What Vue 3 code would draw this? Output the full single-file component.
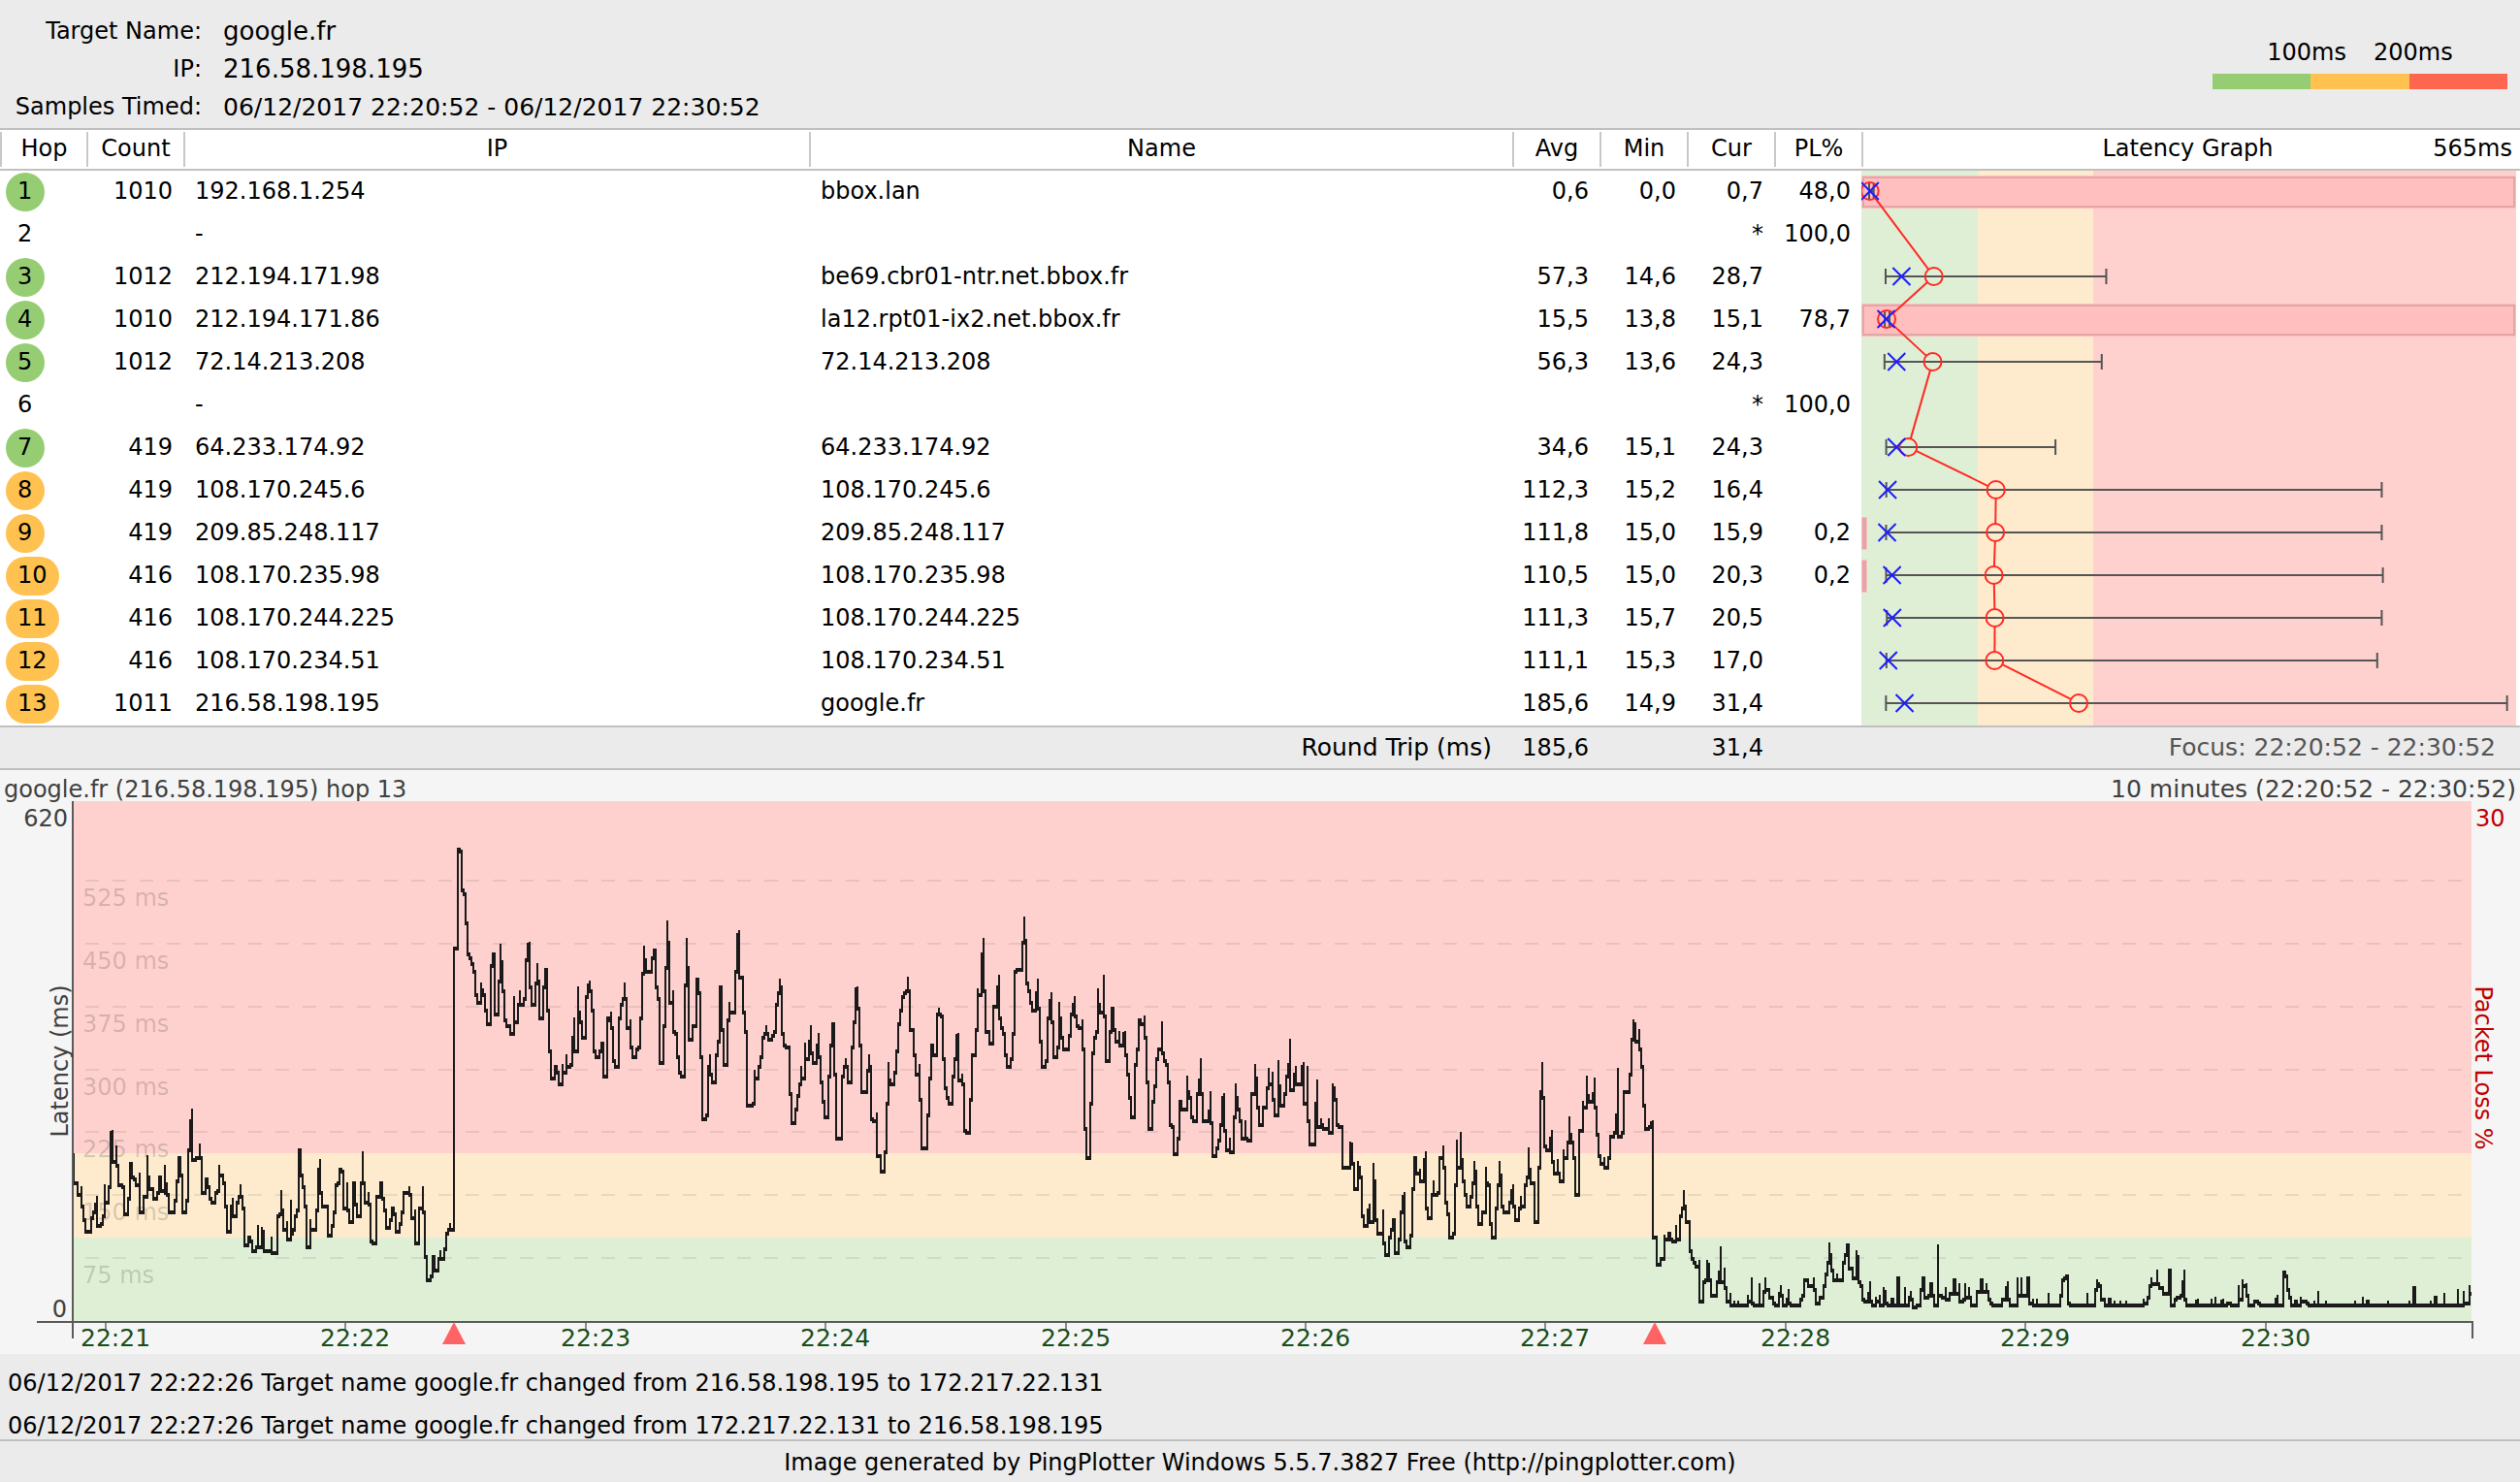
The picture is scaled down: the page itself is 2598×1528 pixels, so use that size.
<script setup>
const summary = [
  { label: 'Target Name:', value: 'google.fr', size: 'target' },
  { label: 'IP:', value: '216.58.198.195', size: 'target' },
  { label: 'Samples Timed:', value: '06/12/2017 22:20:52 - 06/12/2017 22:30:52', size: 'span' }
]

const hops = [
  { hop: 1, tone: 'good', count: '1010', ip: '192.168.1.254', name: 'bbox.lan', avg: '0,6', min: '0,0', cur: '0,7', loss: '48,0', max: 4, lossWidth: 675 },
  { hop: 2, tone: 'none', count: '', ip: '-', name: '', avg: '', min: '', cur: '*', loss: '100,0' },
  { hop: 3, tone: 'good', count: '1012', ip: '212.194.171.98', name: 'be69.cbr01-ntr.net.bbox.fr', avg: '57,3', min: '14,6', cur: '28,7', loss: '', max: 210 },
  { hop: 4, tone: 'good', count: '1010', ip: '212.194.171.86', name: 'la12.rpt01-ix2.net.bbox.fr', avg: '15,5', min: '13,8', cur: '15,1', loss: '78,7', max: 18, lossWidth: 675 },
  { hop: 5, tone: 'good', count: '1012', ip: '72.14.213.208', name: '72.14.213.208', avg: '56,3', min: '13,6', cur: '24,3', loss: '', max: 206 },
  { hop: 6, tone: 'none', count: '', ip: '-', name: '', avg: '', min: '', cur: '*', loss: '100,0' },
  { hop: 7, tone: 'good', count: '419', ip: '64.233.174.92', name: '64.233.174.92', avg: '34,6', min: '15,1', cur: '24,3', loss: '', max: 165 },
  { hop: 8, tone: 'warn', count: '419', ip: '108.170.245.6', name: '108.170.245.6', avg: '112,3', min: '15,2', cur: '16,4', loss: '', max: 454 },
  { hop: 9, tone: 'warn', count: '419', ip: '209.85.248.117', name: '209.85.248.117', avg: '111,8', min: '15,0', cur: '15,9', loss: '0,2', max: 454, lossWidth: 6 },
  { hop: 10, tone: 'warn', count: '416', ip: '108.170.235.98', name: '108.170.235.98', avg: '110,5', min: '15,0', cur: '20,3', loss: '0,2', max: 455, lossWidth: 6 },
  { hop: 11, tone: 'warn', count: '416', ip: '108.170.244.225', name: '108.170.244.225', avg: '111,3', min: '15,7', cur: '20,5', loss: '', max: 454 },
  { hop: 12, tone: 'warn', count: '416', ip: '108.170.234.51', name: '108.170.234.51', avg: '111,1', min: '15,3', cur: '17,0', loss: '', max: 450 },
  { hop: 13, tone: 'warn', count: '1011', ip: '216.58.198.195', name: 'google.fr', avg: '185,6', min: '14,9', cur: '31,4', loss: '', max: 565 }
]

const ROW = 44
const RADIUS = 9
const msToX = (ms) => 8 + ms * 1.164
const num = (text) => Number(text.replace(',', '.'))

const marks = hops
  .map((h, i) => ({ ...h, y: i * ROW + 21 }))
  .filter((h) => h.avg)
  .map((h) => ({ hop: h.hop, y: h.y, avg: msToX(num(h.avg)), min: msToX(num(h.min)), cur: msToX(num(h.cur)), max: msToX(h.max) }))

const losses = hops
  .map((h, i) => ({ hop: h.hop, top: i * ROW + 5, width: h.lossWidth }))
  .filter((l) => l.width)

// Connect neighbouring averages from circle edge to circle edge.
const links = marks.slice(1).map((b, i) => {
  const a = marks[i]
  const dx = b.avg - a.avg
  const dy = b.y - a.y
  const len = Math.hypot(dx, dy)
  const ox = (dx / len) * RADIUS
  const oy = (dy / len) * RADIUS
  return { id: b.hop, x1: a.avg + ox, y1: a.y + oy, x2: b.avg - ox, y2: b.y - oy }
})

// Timeline scale: 620 ms over the 536 units above the axis.
const msToY = (ms) => 536 - ms * 0.8645
const gridLevels = [525, 450, 375, 300, 225, 150, 75].map((ms) => ({ ms, y: Math.round(msToY(ms)) }))
const minutes = Array.from({ length: 10 }, (_, i) => ({ label: `22:${21 + i}`, x: Math.round(109 + i * 247.4) }))
const events = [468, 1706]

// Latency samples as step points, grouped in blocks with their own origin and unit.
const blocks = [
  {
    x: 0, y: -146, ux: 2.8, uy: 2.148,
    points: '213,1096 213,1160 224,1186 235,1170 235,1213 241,1240 246,1268 263,1236 268,1223 274,1208 280,1188 280,1255 291,1250 297,1234 302,1165 302,1202 313,1168 319,1048 324,1042 327,1112 336,1080 336,1122 341,1163 352,1170 358,1230 369,1193 374,1115 380,1125 383,1145 386,1152 391,1163 403,1140 403,1223 414,1188 425,1100 427,1145 431,1172 442,1195 453,1180 459,1145 464,1160 464,1178 475,1122 475,1180 481,1160 481,1184 487,1224 503,1198 509,1157 514,1102 520,1102 520,1142 526,1224 537,1198 543,1088 549,1022 554,998 555,1108 565,1104 577,1075 577,1106 582,1183 593,1152 599,1167 605,1193 610,1202 621,1183 627,1178 632,1122 634,1142 643,1160 649,1213 655,1268 666,1213 671,1195 672,1232 683,1203 688,1192 694,1165 694,1188 700,1214 705,1297 716,1282 722,1288 728,1311 739,1301 745,1255 745,1300 755,1260 758,1268 761,1310 784,1282 784,1315 801,1232 806,1228 812,1178 812,1222 818,1262 828,1245 829,1286 840,1200 840,1272 845,1264 851,1232 857,1221 862,1088 868,1088 868,1143 874,1170 879,1213 885,1302 896,1240 896,1264 912,1222 918,1130 924,1108 925,1180 930,1210 946,1275 958,1256 963,1224 969,1165 975,1162 980,1130 986,1135 992,1214 1003,1160 1003,1222 1008,1246 1019,1162 1026,1207 1031,1233 1042,1158 1047,1092 1047,1158 1053,1205 1064,1183 1064,1207 1070,1287 1075,1293 1087,1190 1098,1158 1103,1193 1110,1222 1115,1259 1126,1240 1131,1214 1137,1227 1143,1267 1154,1250 1159,1224 1165,1180 1182,1170 1182,1187 1188,1237 1199,1222 1199,1293 1210,1215 1221,1168 1221,1225 1227,1322 1232,1376 1243,1366 1249,1322 1255,1330 1255,1354 1266,1328 1271,1312 1272,1328 1283,1306 1288,1273 1294,1262 1299,1248 1299,1264'
  },
  {
    x: 440, y: -6, ux: 3, uy: 2.751,
    points: '84,434 93,430 96,153 102,158 108,269 114,280 120,363 126,452 132,463 138,478 144,499 150,566 156,589 168,535 168,565 174,552 174,565 180,609 186,650 198,484 204,452 207,459 210,622 222,528 228,425 228,475 234,475 234,555 240,637 246,654 258,677 270,572 270,645 282,594 288,557 288,594 300,578 306,465 312,425 318,420 318,543 324,596 336,533 342,480 342,527 348,527 348,632 360,543 366,497 372,508 372,609 378,726 384,803 396,772 402,785 408,819 420,767 420,787 432,738 432,770 444,764 450,690 456,634 456,726 468,546 468,618 474,643 480,687 492,573 498,537 504,530 504,554 510,609 516,726 522,742 534,726 540,706 546,706 546,799 558,632 564,637 570,617 570,660 576,754 582,771 594,632 600,594 606,578 612,535 612,580 618,580 618,660 630,638 630,715 636,743 648,720 654,715 660,632 666,508 672,430 672,465 678,465 678,500 696,463 702,442 708,442 708,545 714,578 720,760 732,654 738,490 744,358 744,420 750,420 750,588 762,557 762,671 768,677 774,742 780,787 786,798 798,540 804,408 804,487 810,487 810,693 822,655 834,524 840,530 840,562 846,562 846,742 852,918 864,908 870,772 876,738 876,793 882,815 894,737 900,699 906,546 912,552 912,665 918,765 930,638 936,590 936,617 954,499 960,398 966,387 966,517 978,616 984,671 990,880 1008,874 1014,782 1014,804 1026,770 1032,743 1038,688 1044,677 1050,656 1050,677 1056,693 1068,683 1074,672 1080,594 1086,562 1092,524 1092,542 1098,542 1098,677 1104,710 1110,715 1122,847 1128,930 1140,891 1146,853 1152,819 1158,771 1158,803 1170,705 1170,748 1182,700 1188,656 1188,730 1194,760 1206,712 1212,678 1212,743 1218,814 1224,869 1230,914 1242,798 1248,710 1254,647 1260,647 1260,792 1266,973 1284,798 1290,772 1296,749 1296,770 1302,815 1314,715 1320,643 1326,550 1332,546 1332,605 1338,605 1338,710 1344,842 1362,782 1368,738 1368,770 1374,918 1380,924'
  },
  {
    x: 900, y: 74, ux: 3, uy: 3,
    points: '12,745 12,876 24,924 36,864 42,714 48,590 48,640 54,640 54,654 66,618 72,552 78,467 84,426 90,384 96,372 102,366 108,324 108,364 114,364 114,486 126,565 132,624 144,596 144,702 150,852 168,750 174,636 180,536 186,546 186,564 198,440 204,420 204,436 210,442 216,442 216,576 222,666 228,696 234,714 246,630 252,576 258,506 264,499 264,642 276,626 276,654 282,798 288,804 300,702 306,564 318,486 324,362 324,378 336,254 342,205 342,366 348,366 348,492 360,528 372,412 384,354 390,319 390,450 396,480 402,498 408,564 414,600 426,576 432,498 438,306 444,300 462,218 468,138 468,212 474,212 474,342 480,366 486,402 492,426 504,374 510,330 510,420 516,522 522,600 534,582 540,450 546,398 552,374 552,462 558,570 570,540 576,402 576,452 582,452 582,512 588,546 606,504 612,438 618,410 624,385 624,444 630,474 636,480 648,457 648,546 654,792 660,882 672,714 678,558 684,510 690,492 696,361 696,410 702,410 702,432 714,319 714,444 720,582 732,492 738,422 744,422 744,486 750,522 762,492 762,534 774,498 780,493 780,564 786,624 792,696 798,756 810,594 816,546 822,454 828,454 828,468 840,445 840,510 846,648 852,792 864,708 870,660 876,576 882,546 894,462 894,558 900,582 906,594 912,648 918,780 924,786 930,870 942,822 948,708 954,716 954,732 972,630 972,675 978,675 978,696 984,756 990,768 1002,684 1008,644 1014,577 1014,684 1020,768 1038,740 1044,678 1044,774 1050,876 1062,852 1068,828 1074,780 1080,698 1086,685 1086,798 1092,858 1104,823 1104,864 1116,756 1122,655 1122,698 1128,698 1128,732 1134,768 1140,822 1152,768 1152,822 1158,828 1170,684 1182,595 1182,637 1188,637 1188,726 1194,780 1206,726 1218,666 1224,607 1224,654 1236,618 1236,702 1242,750 1254,583 1254,661 1260,661 1260,720 1272,684 1278,632 1284,596 1290,517 1290,672 1302,626 1308,601 1308,654 1326,602 1332,590 1332,714 1344,601 1344,768 1350,840 1368,714 1374,643 1374,786 1386,763 1386,780 1392,792 1410,763 1410,804'
  },
  {
    x: 1300, y: 74, ux: 3, uy: 3,
    points: '222,655 222,667 228,667 228,702 234,780 240,786 252,912 276,835 276,841 282,841 282,900 288,978 300,895 300,912 306,912 306,940 312,940 312,1062 318,1092 330,1046 336,1027 336,1080 348,901 348,955 354,955 354,1074 360,1116 378,1046 378,1146 384,1182 396,1128 402,1104 408,1076 414,1076 414,1176 426,1134 432,1050 438,1004 444,991 444,1140 450,1158 462,1122 468,978 474,884 480,884 480,930 492,919 492,954 504,890 510,865 510,1038 516,1068 528,996 534,954 534,996 546,990 552,882 564,847 564,912 570,1020 576,1056 582,1128 594,1116 600,966 606,828 606,912 618,805 618,890 624,890 624,954 630,996 636,1032 648,1000 654,960 660,895 660,926 666,926 666,1032 672,1086 684,1050 696,913 696,962 702,968 708,968 708,1086 714,1128 726,1038 732,968 738,895 738,938 744,938 744,1032 750,1050 768,1018 774,986 780,967 780,1032 786,1074 798,1040 804,1003 804,1032 816,966 822,940 828,853 828,920 834,920 834,960 846,1080 858,912 864,680 870,589 870,694 876,694 876,846 882,858 894,824 900,799 900,894 906,930 918,889 918,930 924,954 936,859 936,882 948,832 954,757 954,812 960,812 960,832 966,882 972,996 984,798 996,709 996,726 1008,631 1008,692 1014,692 1014,708 1026,686 1032,637 1032,726 1038,810 1044,876 1050,900 1062,883 1062,912 1074,882 1080,816 1092,804 1098,752 1104,607 1104,816 1116,804 1122,678 1140,624 1146,514 1152,457 1152,470 1158,470 1158,522 1170,487 1170,546 1176,600 1182,720 1188,792 1200,786 1206,776 1212,769 1212,1128 1224,1212 1236,1194 1248,1123 1248,1134 1260,1118 1266,1118 1266,1134 1272,1140 1284,1092 1284,1134 1296,1062 1302,1038 1308,985 1308,1030 1314,1030 1314,1080 1326,1170 1332,1194 1338,1206 1344,1218'
  },
  {
    x: 1680, y: 174, ux: 3, uy: 3,
    points: '216,900 216,1026 228,966 234,960 240,901 240,914 246,914 246,960 252,1008 270,966 276,938 282,858 282,966 294,924 294,984 300,1026 312,1003 312,1038 324,1026 324,1038 336,1027 336,1038 366,1010 366,1026 378,955 378,1032 384,1038 402,973 402,1038 414,998 420,955 420,988 432,988 432,1014 444,1032 450,1038 462,1004 468,978 468,1008 474,1008 474,1038 486,1018 492,991 492,1032 498,1038 528,1020 534,1010 540,960 552,960 552,978 570,955 570,990 576,1032 588,1016 600,978 606,940 612,908 618,847 618,884 624,884 624,930 630,960 642,943 642,960 660,906 666,882 672,854 678,854 678,922 690,954 702,871 702,890 708,890 708,966 714,978 720,1020 726,1026 738,1004 744,967 744,1026 750,1038 762,1015 762,1026 774,1010 774,1038 786,985 786,998 792,998 792,1032 798,1038 810,1022 816,1022 816,1038 828,956 834,956 834,1038 852,985 852,1038 864,1016 870,997 870,1020 876,1044 888,1038 900,992 906,956 912,956 912,1014 924,1008 930,973 936,980 936,1010 942,1038 954,853 954,1008 966,1014 978,985 978,1020 990,1002 1002,962 1008,967 1008,1002 1020,973 1020,1026 1032,1018 1038,973 1038,1014 1050,985 1050,1014 1056,1038 1074,996 1086,962 1092,962 1092,996 1104,973 1104,996 1110,1020 1116,1032 1122,1038 1152,1020 1164,985 1170,967 1170,1020 1176,1038 1200,955 1200,1008 1212,955 1212,1008 1230,956 1236,956 1236,1032 1248,1021 1248,1038 1260,1021 1260,1038 1296,1003 1296,1038'
  },
  {
    x: 2120, y: 394, ux: 3, uy: 3,
    points: '12,348 18,300 24,296 30,290 36,290 36,372 42,378 96,343 96,378 120,332 126,301 126,314 132,320 138,360 150,378 162,362 168,362 168,378 180,367 180,378 198,367 198,378 216,367 216,378 270,361 270,374 282,356 288,320 294,295 294,312 312,271 312,312 318,324 330,342 348,271 354,271 354,378 366,360 372,354 384,348 390,307 396,271 396,360 402,378 432,366 438,361 438,378 480,361 480,378 492,355 492,378 510,368 516,361 516,378 528,372 540,378 564,319 564,360 576,301 576,320 588,314 588,348 594,378 612,366 624,372 630,378 678,361 684,349 684,378 702,278 708,290 714,332 720,354 726,378 738,368 744,368 744,378 756,355 756,366 774,372 780,378 798,367 798,378 810,337 810,378 834,367 834,378 924,367 924,378 948,355 948,378 960,367 966,367 966,378 1026,367 1026,378 1092,367 1092,378 1104,326 1110,326 1110,378 1158,367 1158,378 1170,355 1176,361 1176,378 1200,343 1200,378 1242,331 1242,378 1260,337 1260,372 1278,319 1278,342 1284,342'
  }
]

// Samples sit on a two-unit grid so that every step has a crisp edge.
const snap = (v) => Math.round(v / 2) * 2
const samples = blocks.flatMap((b) =>
  b.points.split(' ').map((pair) => {
    const [x, y] = pair.split(',').map(Number)
    return [snap(b.x + x / b.ux), snap(b.y + y / b.uy)]
  })
)
const trace = samples.map(([x, y], i) => (i ? `H${x}V${y}` : `M${x} ${y}`)).join('')

const log = [
  '06/12/2017 22:22:26 Target name google.fr changed from 216.58.198.195 to 172.217.22.131',
  '06/12/2017 22:27:26 Target name google.fr changed from 172.217.22.131 to 216.58.198.195'
]
</script>

<template>
  <main class="report">
    <header class="summary">
      <dl class="facts">
        <template v-for="item in summary" :key="item.label">
          <dt>{{ item.label }}</dt>
          <dd :class="item.size">{{ item.value }}</dd>
        </template>
      </dl>
      <div class="legend">
        <div class="legend-labels"><span>100ms</span><span>200ms</span></div>
        <div class="legend-bar"><i class="good"></i><i class="warn"></i><i class="bad"></i></div>
      </div>
    </header>

    <table class="hops">
      <colgroup>
        <col class="col-hop" />
        <col class="col-count" />
        <col class="col-ip" />
        <col />
        <col v-for="n in 4" :key="n" class="col-num" />
        <col class="col-graph" />
      </colgroup>
      <thead>
        <tr>
          <th scope="col"><div>Hop</div></th>
          <th scope="col"><div>Count</div></th>
          <th scope="col"><div>IP</div></th>
          <th scope="col"><div>Name</div></th>
          <th scope="col"><div>Avg</div></th>
          <th scope="col"><div>Min</div></th>
          <th scope="col"><div>Cur</div></th>
          <th scope="col"><div>PL%</div></th>
          <th scope="col"><div class="graph-head"><span>Latency Graph</span><span class="scale-max">565ms</span></div></th>
        </tr>
      </thead>
      <tbody>
        <tr v-for="(row, i) in hops" :key="row.hop">
          <td class="hop"><span class="chip" :class="row.tone">{{ row.hop }}</span></td>
          <td class="num">{{ row.count }}</td>
          <td class="text">{{ row.ip }}</td>
          <td class="text">{{ row.name }}</td>
          <td class="num">{{ row.avg }}</td>
          <td class="num">{{ row.min }}</td>
          <td class="num">{{ row.cur }}</td>
          <td class="num">{{ row.loss }}</td>
          <td v-if="i === 0" class="graph" :rowspan="hops.length">
            <svg class="latency" viewBox="0 0 675 572" preserveAspectRatio="none" role="img" aria-label="Latency Graph">
              <rect class="band-good" width="120" height="572" />
              <rect class="band-warn" x="120" width="119" height="572" />
              <rect class="band-bad" x="239" width="436" height="572" />
              <g v-for="l in losses" :key="'l' + l.hop">
                <rect class="loss" :y="l.top" :width="l.width" height="34" />
                <rect class="loss-edge" x="2" :y="l.top + 2" :width="l.width - 4" height="30" />
              </g>
              <g v-for="m in marks" :key="'r' + m.hop" class="range">
                <path :d="`M${m.min} ${m.y}H${m.max}`" />
                <path :d="`M${m.min} ${m.y - 8}v16M${m.max} ${m.y - 8}v16`" />
              </g>
              <g class="average">
                <line v-for="k in links" :key="'k' + k.id" :x1="k.x1" :y1="k.y1" :x2="k.x2" :y2="k.y2" />
                <circle v-for="m in marks" :key="'c' + m.hop" :cx="m.avg" :cy="m.y" :r="RADIUS" />
              </g>
              <path v-for="m in marks" :key="'x' + m.hop" class="current" :d="`M${m.cur - 9} ${m.y - 9}l18 18m0 -18l-18 18`" />
            </svg>
          </td>
        </tr>
      </tbody>
      <tfoot>
        <tr>
          <td colspan="4" class="round-trip">Round Trip (ms)</td>
          <td class="num">185,6</td>
          <td></td>
          <td class="num">31,4</td>
          <td></td>
          <td class="focus">Focus: 22:20:52 - 22:30:52</td>
        </tr>
      </tfoot>
    </table>

    <section class="timeline">
      <div class="timeline-head">
        <span>google.fr (216.58.198.195) hop 13</span>
        <span class="span">10 minutes (22:20:52 - 22:30:52)</span>
      </div>
      <svg class="plot" viewBox="0 0 2598 570" role="img" aria-label="Latency over time">
        <rect class="band-bad" x="76" width="2472" height="363" />
        <rect class="band-warn" x="76" y="363" width="2472" height="87" />
        <rect class="band-good" x="76" y="450" width="2472" height="86" />
        <g v-for="g in gridLevels" :key="g.ms">
          <path class="grid" :d="`M88 ${g.y}H2538`" />
          <text class="grid-label" x="85" :y="g.y + 26">{{ g.ms }} ms</text>
        </g>
        <g class="trace">
          <path :d="trace" transform="translate(0 -1)" />
          <path :d="trace" transform="translate(0 1)" />
        </g>
        <path class="tick" v-for="m in minutes" :key="'t' + m.label" :d="`M${m.x} 538v8`" />
        <path class="axis" d="M75 0V554M38 537H2549V554" />
        <path class="event" v-for="x in events" :key="x" :d="`M${x} 537l12 23h-24z`" />
        <text class="minute" v-for="m in minutes" :key="m.label" :x="m.x - 26" y="562">{{ m.label }}</text>
        <text class="axis-text" x="70" y="26" text-anchor="end">620</text>
        <text class="axis-text" x="69" y="532" text-anchor="end">0</text>
        <text class="axis-text" text-anchor="middle" transform="translate(70 268) rotate(-90)">Latency (ms)</text>
        <text class="loss-text" x="2552" y="26">30</text>
        <text class="loss-text" text-anchor="middle" transform="translate(2552 275) rotate(90)">Packet Loss %</text>
      </svg>
    </section>

    <ul class="log">
      <li v-for="line in log" :key="line">{{ line }}</li>
    </ul>

    <footer class="credit">Image generated by PingPlotter Windows 5.5.7.3827 Free (<a href="http://pingplotter.com">http://pingplotter.com</a>)</footer>
  </main>
</template>

<style>
body {
  background: #ebebeb;
}
</style>

<style scoped>
.report {
  font-family: Verdana, "DejaVu Sans", sans-serif;
  font-size: 24px;
  color: #000;
  white-space: nowrap;
}

.summary {
  display: flex;
  justify-content: space-between;
  padding: 13px 13px 2px 0;
  border-bottom: 2px solid #c0c0c0;
}
.facts {
  display: grid;
  grid-template-columns: 208px auto;
  column-gap: 22px;
  margin: 0;
  line-height: 39px;
}
.facts dt {
  text-align: right;
}
.facts dd {
  margin: 0;
}
.target {
  font-size: 26px;
}
.span {
  font-size: 25px;
}
.legend {
  width: 304px;
  padding-top: 25px;
}
.legend-labels {
  display: flex;
  justify-content: center;
  gap: 28px;
  line-height: 32px;
  height: 38px;
}
.legend-bar {
  display: flex;
  height: 16px;
}
.legend-bar i {
  flex: 1;
}

.good {
  background: #96cd73;
}
.warn {
  background: #ffc150;
}
.bad {
  background: #ff6650;
}

.hops {
  width: 100%;
  table-layout: fixed;
  border-collapse: separate;
  border-spacing: 0;
  background: #fff;
}
.col-hop {
  width: 89px;
}
.col-count {
  width: 100px;
}
.col-ip {
  width: 645px;
}
.col-num {
  width: 90px;
}
.col-graph {
  width: 679px;
}
.hops th {
  padding: 0;
  font-weight: normal;
  border-bottom: 2px solid #c0c0c0;
}
.hops th > div {
  height: 36px;
  margin: 2px 0;
  line-height: 34px;
  border-left: 2px solid #c8c8c8;
}
.graph-head {
  display: grid;
  grid-template-columns: 1fr auto 1fr;
  padding-right: 8px;
}
.graph-head span:first-child {
  grid-column: 2;
}
.scale-max {
  text-align: right;
}
.hops tbody td {
  height: 44px;
  padding: 0;
  line-height: 42px;
  vertical-align: top;
}
.hops td.hop {
  padding: 2px 0 0 6px;
  height: 42px;
}
.chip {
  display: block;
  box-sizing: border-box;
  width: fit-content;
  min-width: 40px;
  height: 40px;
  padding: 0 12px;
  line-height: 38px;
  border-radius: 20px;
}
.hops td.num {
  text-align: right;
  padding-right: 11px;
}
.hops td.text {
  padding-left: 12px;
}
.hops td.graph {
  padding-right: 4px;
}
.latency {
  display: block;
  width: 100%;
  height: 572px;
}
.hops tfoot td {
  height: 42px;
  padding: 0;
  line-height: 42px;
  vertical-align: top;
  background: #ebebeb;
  border-top: 2px solid #c0c0c0;
  border-bottom: 2px solid #c0c0c0;
}
.hops td.round-trip {
  text-align: right;
  padding-right: 21px;
  font-size: 25px;
}
.hops td.focus {
  text-align: right;
  padding-right: 25px;
  font-size: 25px;
  color: #555;
}

.band-good {
  fill: #dfefd5;
}
.band-warn {
  fill: #feebcd;
}
.band-bad {
  fill: #fed1ce;
}
.loss {
  fill: #ffbfbf;
}
.loss-edge {
  fill: none;
  stroke: #e1a6a7;
  stroke-width: 2;
}
.range {
  fill: none;
  stroke: #555;
  stroke-width: 2;
}
.average {
  fill: none;
  stroke: #ff2a24;
  stroke-width: 2;
}
.current {
  fill: none;
  stroke: #1c1cff;
  stroke-width: 2;
}

.timeline {
  background: #f5f5f5;
}
.timeline-head {
  display: flex;
  justify-content: space-between;
  height: 25px;
  padding: 7px 4px 0;
  line-height: 26px;
  color: #404040;
}
.plot {
  display: block;
  width: 100%;
  height: auto;
  font-size: 24px;
}
.grid {
  fill: none;
  stroke: #000;
  stroke-opacity: 0.08;
  stroke-width: 2;
  stroke-dasharray: 14 14;
}
.grid-label {
  fill: #000;
  fill-opacity: 0.17;
}
.trace {
  fill: none;
  stroke: #1a1a1a;
  stroke-width: 2;
}
.axis {
  fill: none;
  stroke: #5a5a5a;
  stroke-width: 2;
}
.tick {
  fill: none;
  stroke: #8c8c8c;
  stroke-width: 2;
}
.event {
  fill: #ff6464;
}
.minute {
  fill: #174f17;
  font-size: 25px;
}
.axis-text {
  fill: #404040;
}
.loss-text {
  fill: #c00000;
}

.log {
  display: grid;
  gap: 16px;
  margin: 0;
  padding: 16px 8px 0;
  list-style: none;
  line-height: 28px;
  border-bottom: 2px solid #c0c0c0;
}
.credit {
  padding-top: 3px;
  line-height: 39px;
  text-align: center;
}
.credit a {
  color: inherit;
  text-decoration: none;
}
</style>
